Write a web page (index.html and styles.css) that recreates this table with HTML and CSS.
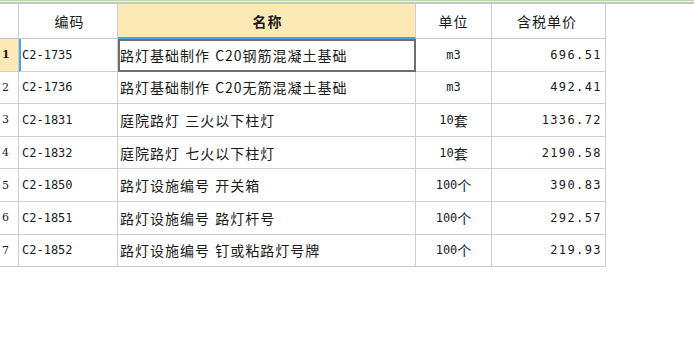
FILE: index.html
```html
<!DOCTYPE html>
<html lang="zh">
<head>
<meta charset="utf-8">
<link rel="stylesheet" href="styles.css">
</head>
<body>
<div class="topbar"></div>
<div class="topline"></div>
<div class="grid">
  <div class="row head">
    <div class="c num"></div>
    <div class="c code hc">编码</div>
    <div class="c name hc sel-head">名称</div>
    <div class="c unit hc">单位</div>
    <div class="c price hc">含税单价</div>
  </div>
  <div class="row active">
    <div class="c num sel-num">1</div>
    <div class="c code first">C2-1735</div>
    <div class="c name focus">路灯基础制作 C20钢筋混凝土基础</div>
    <div class="c unit"><span class="lat">m3</span></div>
    <div class="c price">696.51</div>
  </div>
  <div class="row">
    <div class="c num">2</div>
    <div class="c code">C2-1736</div>
    <div class="c name">路灯基础制作 C20无筋混凝土基础</div>
    <div class="c unit"><span class="lat">m3</span></div>
    <div class="c price">492.41</div>
  </div>
  <div class="row">
    <div class="c num">3</div>
    <div class="c code">C2-1831</div>
    <div class="c name">庭院路灯 三火以下柱灯</div>
    <div class="c unit"><span class="lat">10</span>套</div>
    <div class="c price">1336.72</div>
  </div>
  <div class="row">
    <div class="c num">4</div>
    <div class="c code">C2-1832</div>
    <div class="c name">庭院路灯 七火以下柱灯</div>
    <div class="c unit"><span class="lat">10</span>套</div>
    <div class="c price">2190.58</div>
  </div>
  <div class="row">
    <div class="c num">5</div>
    <div class="c code">C2-1850</div>
    <div class="c name">路灯设施编号 开关箱</div>
    <div class="c unit"><span class="lat">100</span>个</div>
    <div class="c price">390.83</div>
  </div>
  <div class="row">
    <div class="c num">6</div>
    <div class="c code">C2-1851</div>
    <div class="c name">路灯设施编号 路灯杆号</div>
    <div class="c unit"><span class="lat">100</span>个</div>
    <div class="c price">292.57</div>
  </div>
  <div class="row">
    <div class="c num">7</div>
    <div class="c code">C2-1852</div>
    <div class="c name">路灯设施编号 钉或粘路灯号牌</div>
    <div class="c unit"><span class="lat">100</span>个</div>
    <div class="c price">219.93</div>
  </div>
</div>
</body>
</html>
```
FILE: styles.css
```css
html, body {
  margin: 0;
  padding: 0;
  background: #ffffff;
}
body {
  font-family: "Noto Sans CJK SC", "DejaVu Sans", sans-serif;
  font-size: 14px;
  color: #1a1a1a;
  width: 694px;
  height: 346px;
  overflow: hidden;
}
.topbar {
  height: 1px;
  background: #b6dca2;
  border-bottom: 1px solid #eef5ea;
}
.topline {
  height: 2px;
  background: #c4c4c4;
}
.grid {
  width: 606px;
}
.row {
  display: grid;
  grid-template-columns: 19px 99px 298px 76px 114px;
  height: 32.6px;
}
.row.head {
  height: 35px;
}
.c {
  border-right: 1px solid #cfcfcf;
  border-bottom: 1px solid #cfcfcf;
  display: flex;
  align-items: center;
  white-space: pre;
  overflow: hidden;
  box-sizing: border-box;
}
.head .c {
  border-bottom-color: #c6c6c6;
  justify-content: center;
  font-family: "Noto Sans CJK SC", sans-serif;
  font-size: 14px;
  letter-spacing: 1px;
}
.head .name {
  font-weight: bold;
  background: #fde9b6;
  border-bottom: 2px solid #4aa6dc;
}
.num {
  padding-left: 2px;
  font-family: "DejaVu Serif", serif;
  font-size: 11px;
}
.sel-num {
  background: #fde9b6;
  font-weight: bold;
}
.code {
  padding-left: 3px;
  font-family: "DejaVu Sans Mono", monospace;
  font-size: 12px;
}
.code.first {
  border-left: 2px solid #4aa6dc;
  padding-left: 1px;
}
.name {
  padding-left: 2px;
  letter-spacing: 1px;
  word-spacing: 1px;
}
.name.focus {
  border: 2px solid #6e6e6e;
  padding-left: 0;
}
.unit {
  justify-content: center;
  font-family: "Noto Sans CJK SC", sans-serif;
  font-size: 14px;
}
.lat {
  font-family: "DejaVu Sans Mono", monospace;
  font-size: 12px;
}
.price {
  justify-content: flex-end;
  padding-right: 3px;
  font-family: "DejaVu Sans Mono", monospace;
  font-size: 12px;
  letter-spacing: 1.4px;
}
```
